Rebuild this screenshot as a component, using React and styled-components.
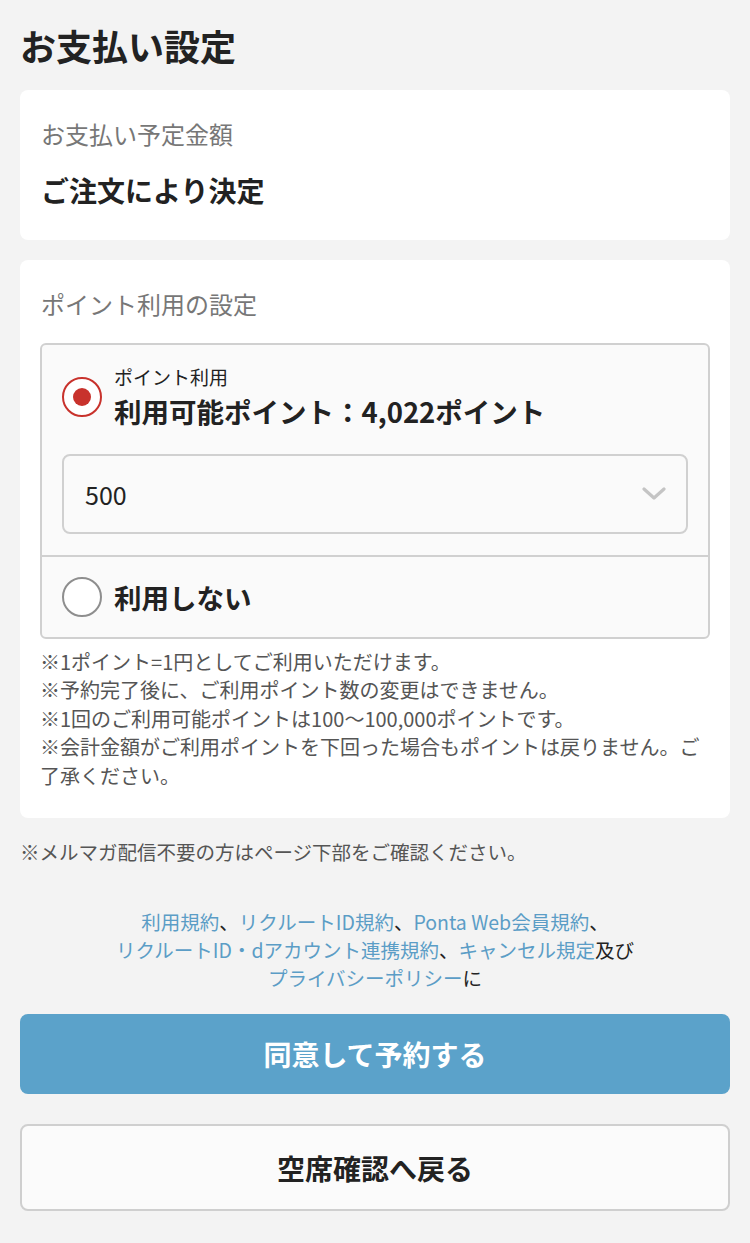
import React from "react";
import styled, { createGlobalStyle } from "styled-components";

const Global = createGlobalStyle`
  html, body { margin: 0; padding: 0; background: #f3f3f3; }
  body { font-family: "Noto Sans CJK JP", "Noto Sans", sans-serif; color: #222; }
  * { box-sizing: border-box; }
`;

const Page = styled.div`
  padding: 0 20px 32px;
  display: flex;
  flex-direction: column;
`;

const Title = styled.h1`
  margin: 0;
  padding: 20px 0;
  font-size: 36px;
  line-height: 50px;
  font-weight: 700;
  color: #222;
`;

const Card = styled.section`
  background: #fff;
  border-radius: 8px;
  padding: 27px 20px ${(p) => p.$pb || 30}px;
  margin-bottom: 20px;
`;

const Label = styled.div`
  font-size: 24px;
  line-height: 34px;
  color: #777;
  padding-left: 1px;
`;

const Value = styled.div`
  margin-top: 19px;
  font-size: 28px;
  line-height: 40px;
  font-weight: 700;
  color: #222;
  padding-left: 1px;
`;

const Options = styled.div`
  margin-top: 22px;
  border: 2px solid #d0d0d0;
  border-radius: 6px;
  background: #fafafa;
  display: flex;
  flex-direction: column;
`;

const Option = styled.div`
  padding: ${(p) => p.$pad};
  display: flex;
  flex-direction: column;
  & + & { border-top: 2px solid #d0d0d0; }
`;

const Row = styled.div`
  display: flex;
  align-items: center;
  gap: 12px;
`;

const Radio = styled.span`
  flex: none;
  width: 40px;
  height: 40px;
  border-radius: 50%;
  border: 2px solid ${(p) => (p.$on ? "#c8322c" : "#8e8e8e")};
  background: #fff;
  display: flex;
  align-items: center;
  justify-content: center;
  &::after {
    content: "";
    display: ${(p) => (p.$on ? "block" : "none")};
    width: 18px;
    height: 18px;
    border-radius: 50%;
    background: #c8322c;
  }
`;

const Texts = styled.div`
  display: flex;
  flex-direction: column;
`;

const Small = styled.div`
  font-size: 19px;
  line-height: 28px;
  color: #222;
`;

const Big = styled.div`
  font-size: 27.5px;
  line-height: 40px;
  font-weight: 700;
  color: #222;
`;

const Select = styled.div`
  margin-top: 23px;
  height: 80px;
  border: 2px solid #d0d0d0;
  border-radius: 8px;
  background: #fafafa;
  display: flex;
  align-items: center;
  justify-content: space-between;
  padding: 0 20px 0 21px;
  font-size: 25px;
  color: #222;
`;

const Notes = styled.div`
  margin-top: 9px;
  font-size: 20px;
  line-height: 28.4px;
  color: #555;
`;

const Mail = styled.div`
  font-size: 19.5px;
  line-height: 28px;
  color: #555;
`;

const Terms = styled.div`
  margin-top: 42px;
  text-align: center;
  font-size: 19.5px;
  line-height: 28px;
  color: #222;
`;

const A = styled.span`
  color: #5b9dc6;
`;

const Button = styled.button`
  width: 100%;
  height: ${(p) => p.$h}px;
  margin-top: ${(p) => p.$mt}px;
  border-radius: 8px;
  border: ${(p) => (p.$primary ? "none" : "2px solid #cfcfcf")};
  background: ${(p) => (p.$primary ? "#5ba2ca" : "#fbfbfb")};
  color: ${(p) => (p.$primary ? "#fff" : "#222")};
  font-family: inherit;
  font-size: 28px;
  font-weight: 700;
  display: flex;
  align-items: center;
  justify-content: center;
  padding: 0;
`;

export default function App() {
  return (
    <>
      <Global />
      <Page>
        <Title>お支払い設定</Title>
        <Card>
          <Label>お支払い予定金額</Label>
          <Value>ご注文により決定</Value>
        </Card>
        <Card $pb={28}>
          <Label>ポイント利用の設定</Label>
          <Options>
            <Option $pad="18px 20px 21px">
              <Row>
                <Radio $on />
                <Texts>
                  <Small>ポイント利用</Small>
                  <Big>利用可能ポイント：4,022ポイント</Big>
                </Texts>
              </Row>
              <Select>
                <span>500</span>
                <svg width="24" height="14" viewBox="0 0 24 14">
                  <path d="M2 2 L12 11 L22 2" fill="none" stroke="#c4c4c4" strokeWidth="3.2" strokeLinecap="round" strokeLinejoin="round" />
                </svg>
              </Select>
            </Option>
            <Option $pad="20px 20px 20px">
              <Row>
                <Radio />
                <Big>利用しない</Big>
              </Row>
            </Option>
          </Options>
          <Notes>
            <div>※1ポイント=1円としてご利用いただけます。</div>
            <div>※予約完了後に、ご利用ポイント数の変更はできません。</div>
            <div>※1回のご利用可能ポイントは100〜100,000ポイントです。</div>
            <div>※会計金額がご利用ポイントを下回った場合もポイントは戻りません。ご了承ください。</div>
          </Notes>
        </Card>
        <Mail>※メルマガ配信不要の方はページ下部をご確認ください。</Mail>
        <Terms>
          <A>利用規約</A>、<A>リクルートID規約</A>、<A>Ponta Web会員規約</A>、<br />
          <A>リクルートID・dアカウント連携規約</A>、<A>キャンセル規定</A>及び<br />
          <A>プライバシーポリシー</A>に
        </Terms>
        <Button $primary $h={80} $mt={22}>同意して予約する</Button>
        <Button $h={87} $mt={30}>空席確認へ戻る</Button>
      </Page>
    </>
  );
}
